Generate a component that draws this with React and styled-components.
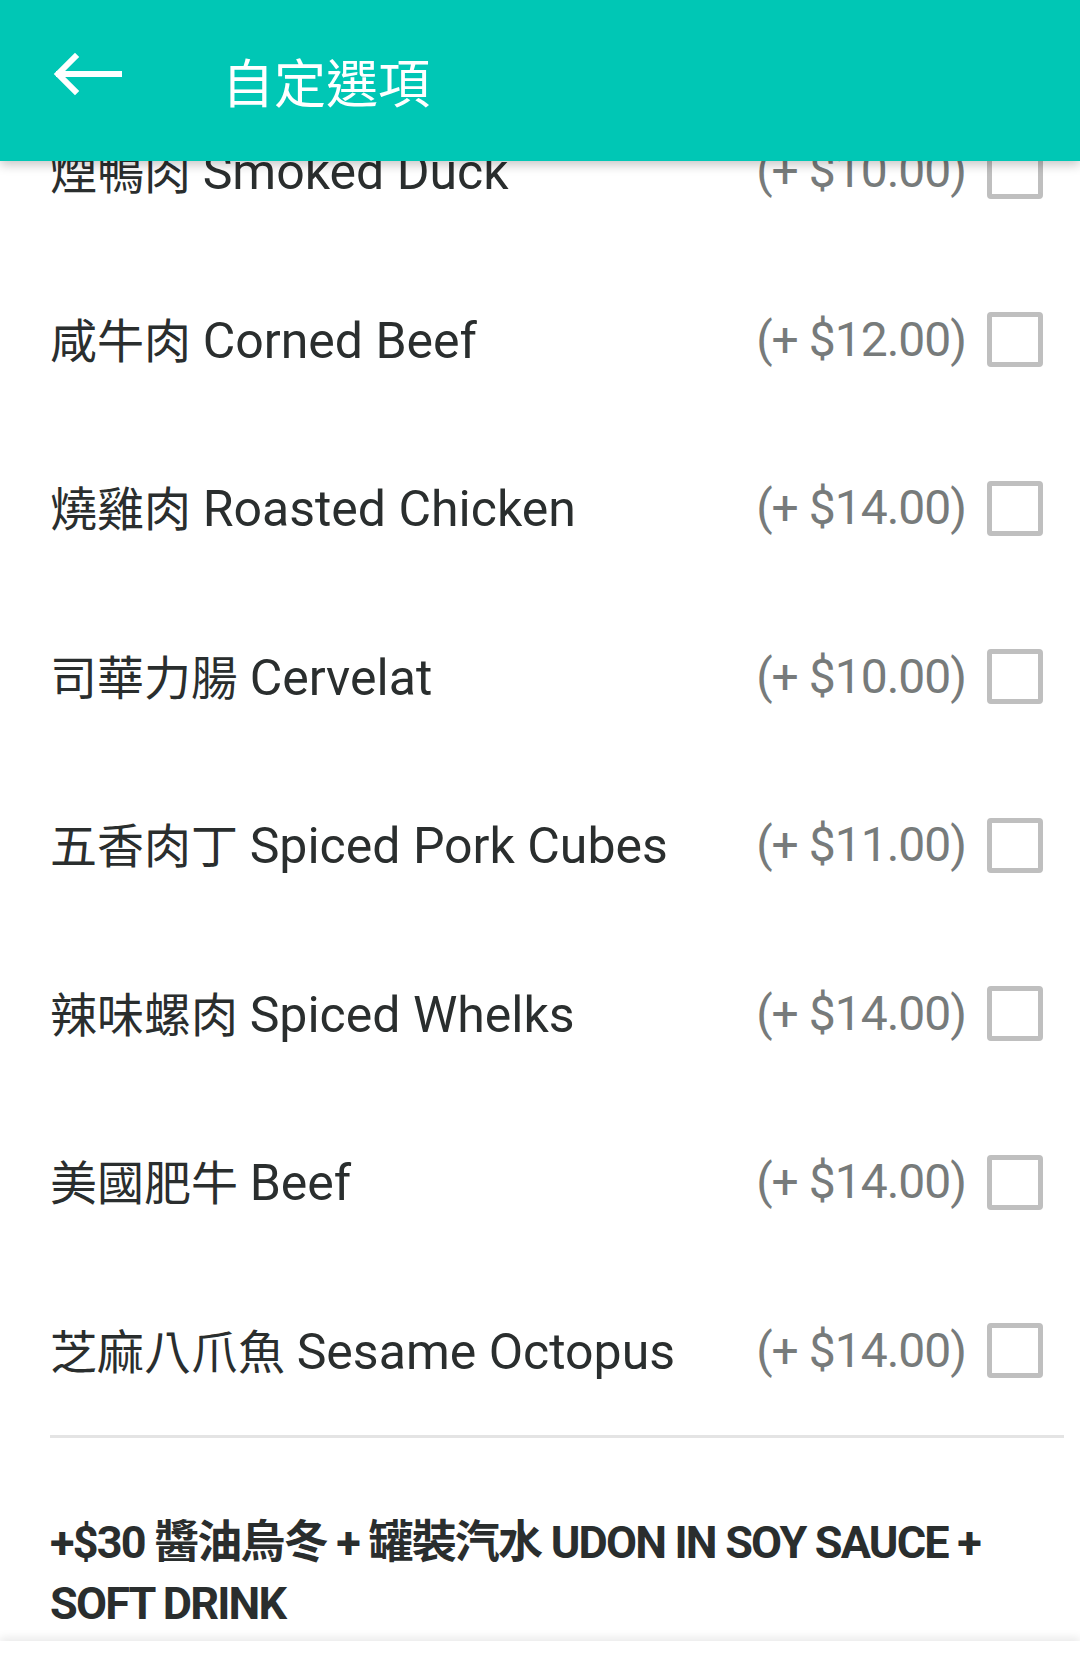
import React from "react"
import styled, { createGlobalStyle } from "styled-components"

const GlobalStyle = createGlobalStyle`
  html, body {
    margin: 0;
    padding: 0;
    background: #ffffff;
  }
  body {
    font-family: "Roboto", "Noto Sans CJK TC", sans-serif;
    color: #2e3333;
  }
`

const options = [
  { zh: "煙鴨肉", en: "Smoked Duck", price: "(+ $10.00)" },
  { zh: "咸牛肉", en: "Corned Beef", price: "(+ $12.00)" },
  { zh: "燒雞肉", en: "Roasted Chicken", price: "(+ $14.00)" },
  { zh: "司華力腸", en: "Cervelat", price: "(+ $10.00)" },
  { zh: "五香肉丁", en: "Spiced Pork Cubes", price: "(+ $11.00)" },
  { zh: "辣味螺肉", en: "Spiced Whelks", price: "(+ $14.00)" },
  { zh: "美國肥牛", en: "Beef", price: "(+ $14.00)" },
  { zh: "芝麻八爪魚", en: "Sesame Octopus", price: "(+ $14.00)" },
]

const BackArrow = () => (
  <svg width="70" height="46" viewBox="0 0 70 46" fill="none">
    <path
      d="M66 22H6M22 5L5 22l17 17"
      stroke="#ffffff"
      strokeWidth="6"
      strokeLinecap="square"
    />
  </svg>
)

const App = () => {
  return (
    <Screen>
      <GlobalStyle />
      <Toolbar>
        <BackButton>
          <BackArrow />
        </BackButton>
        <Title>自定選項</Title>
      </Toolbar>
      <Content>
        <OptionList>
          {options.map((o) => (
            <OptionRow key={o.en}>
              <OptionName>
                <Zh>{o.zh}</Zh> <En>{o.en}</En>
              </OptionName>
              <Price>{o.price}</Price>
              <Checkbox />
            </OptionRow>
          ))}
        </OptionList>
        <SectionTitle>+$30 醬油烏冬 + 罐裝汽水 UDON IN SOY SAUCE + SOFT DRINK</SectionTitle>
      </Content>
      <BottomBar />
    </Screen>
  )
}

export default App

const Screen = styled.div`
  width: 1080px;
  height: 1673px;
  overflow: hidden;
  display: flex;
  flex-direction: column;
  background: #ffffff;
`

const Toolbar = styled.header`
  position: relative;
  z-index: 2;
  flex: 0 0 161px;
  display: flex;
  align-items: center;
  background: #00c7b5;
  box-shadow: 0 4px 10px rgba(0, 0, 0, 0.22);
`

const BackButton = styled.div`
  width: 70px;
  height: 46px;
  margin: 0 0 12px 53px;
  display: flex;
`

const Title = styled.h1`
  margin: 0 0 0 99px;
  font-family: "Noto Sans CJK TC", sans-serif;
  font-size: 52px;
  font-weight: 400;
  line-height: 1;
  color: #ffffff;
`

const Content = styled.main`
  flex: 1;
  margin-top: -74px;
  padding: 0 16px 0 50px;
`

const OptionList = styled.div`
  border-bottom: 3px solid #e4e4e4;
`

const OptionRow = styled.div`
  height: 168.5px;
  display: flex;
  align-items: center;
`

const OptionName = styled.span`
  flex: 1;
  font-size: 47px;
  line-height: 1;
  color: #2a2e2e;
  white-space: nowrap;
`

const Zh = styled.span`
  font-family: "Noto Sans CJK TC", sans-serif;
  font-size: 47px;
`

const En = styled.span`
  font-family: "Roboto", sans-serif;
  font-size: 50px;
`

const Price = styled.span`
  font-size: 48px;
  letter-spacing: -1px;
  line-height: 1;
  color: #777b7b;
  margin-right: 21px;
`

const Checkbox = styled.span`
  box-sizing: border-box;
  width: 56px;
  height: 55px;
  margin-right: 21px;
  border: 5.5px solid #bfbfbf;
  border-radius: 4px;
`

const SectionTitle = styled.h2`
  margin: 74px 0 0;
  padding-right: 60px;
  font-size: 45px;
  font-weight: 700;
  line-height: 61px;
  letter-spacing: -1.8px;
  color: #2a2e2e;
`

const BottomBar = styled.footer`
  flex: 0 0 32px;
  background: #ffffff;
  box-shadow: 0 -4px 8px rgba(0, 0, 0, 0.08);
`
